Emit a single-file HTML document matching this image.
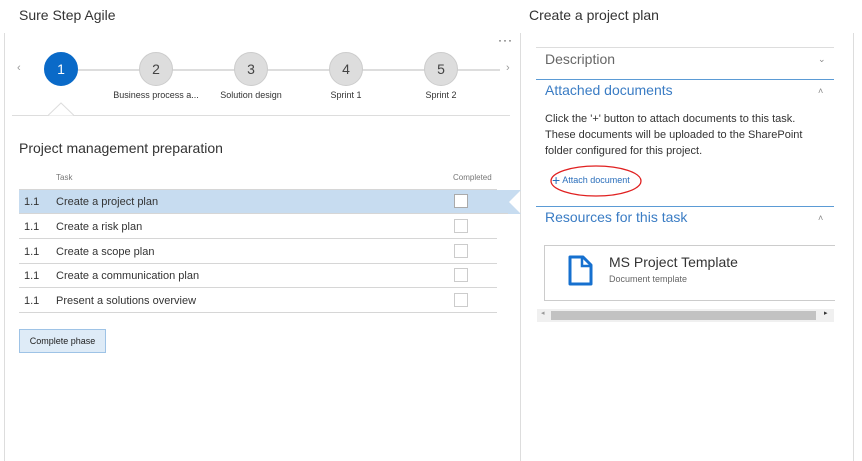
<!DOCTYPE html>
<html><head><style>
*{margin:0;padding:0;box-sizing:border-box}
body{width:862px;height:461px;background:#fff;font-family:"Segoe UI","Liberation Sans",sans-serif;color:#333;position:relative;overflow:hidden}
.a{position:absolute}
.circ{position:absolute;width:34px;height:34px;border-radius:50%;background:#ddd;border:1px solid #ccc;text-align:center;line-height:32px;font-size:14px;color:#444}
.lbl{position:absolute;font-size:9px;color:#333;text-align:center;width:100px}
.row{position:absolute;left:19px;width:478px;height:24px;border-bottom:1px solid #d6d6d6;font-size:11px;line-height:24px}
.row .n{position:absolute;left:5px}
.row .t{position:absolute;left:37px}
.cb{position:absolute;left:435px;top:4px;width:14px;height:14px;border:1px solid #aaa;background:#fff}
.hd{position:absolute;left:545px;font-size:14px}
.chev{position:absolute;left:818px;font-size:9px;color:#888}
</style></head><body>
<div class="a" style="left:19px;top:7px;font-size:14px;color:#333">Sure Step Agile</div>
<div class="a" style="left:529px;top:7px;font-size:14px;color:#333">Create a project plan</div>
<div class="a" style="left:4px;top:33px;width:1px;height:428px;background:#ddd"></div>
<div class="a" style="left:520px;top:33px;width:1px;height:428px;background:#ddd"></div>
<div class="a" style="left:853px;top:33px;width:1px;height:428px;background:#ddd"></div>
<div class="a" style="left:498px;top:33px;font-size:12px;color:#333;letter-spacing:1px">···</div>
<div class="a" style="left:17px;top:62px;font-size:11px;color:#999">‹</div>
<div class="a" style="left:506px;top:62px;font-size:11px;color:#999">›</div>
<div class="a" style="left:60px;top:69px;width:440px;height:2px;background:#ddd"></div>
<div class="circ" style="left:44px;top:52px;background:#0a6ac8;border-color:#0a6ac8;color:#fff">1</div>
<div class="circ" style="left:139px;top:52px">2</div>
<div class="circ" style="left:234px;top:52px">3</div>
<div class="circ" style="left:329px;top:52px">4</div>
<div class="circ" style="left:424px;top:52px">5</div>
<div class="lbl" style="left:106px;top:90px">Business process a...</div>
<div class="lbl" style="left:201px;top:90px">Solution design</div>
<div class="lbl" style="left:296px;top:90px">Sprint 1</div>
<div class="lbl" style="left:391px;top:90px">Sprint 2</div>
<div class="a" style="left:12px;top:115px;width:498px;height:1px;background:#ddd"></div>
<svg class="a" style="left:48px;top:101px" width="26" height="15"><path d="M0 14.5 L13 2 L26 14.5" fill="#fff" stroke="#ddd"/></svg>
<div class="a" style="left:19px;top:140px;font-size:14px;color:#333">Project management preparation</div>
<div class="a" style="left:56px;top:173px;font-size:8px;color:#777">Task</div>
<div class="a" style="left:453px;top:173px;font-size:8px;color:#777">Completed</div>
<div class="a" style="left:19px;top:189px;width:478px;height:1px;background:#d6d6d6"></div>
<div class="row" style="top:190px;background:#c7dcf0;width:490px"><span class="n">1.1</span><span class="t">Create a project plan</span><span class="cb"></span></div>
<svg class="a" style="left:508px;top:190px" width="13" height="24"><path d="M0 0 H13 L1 12 L13 24 H0Z" fill="#c7dcf0"/></svg>
<div class="row" style="top:215px"><span class="n">1.1</span><span class="t">Create a risk plan</span><span class="cb" style="border-color:#ccc"></span></div>
<div class="row" style="top:240px"><span class="n">1.1</span><span class="t">Create a scope plan</span><span class="cb" style="border-color:#ccc"></span></div>
<div class="row" style="top:264px"><span class="n">1.1</span><span class="t">Create a communication plan</span><span class="cb" style="border-color:#ccc"></span></div>
<div class="row" style="top:289px"><span class="n">1.1</span><span class="t">Present a solutions overview</span><span class="cb" style="border-color:#ccc"></span></div>
<div class="a" style="left:19px;top:329px;width:87px;height:24px;background:#deebf7;border:1px solid #9ec3e6;font-size:9px;line-height:22px;text-align:center;color:#222">Complete phase</div>

<div class="a" style="left:536px;top:47px;width:298px;height:1px;background:#ddd"></div>
<div class="hd" style="top:51px;color:#666">Description</div><div class="chev" style="top:54px">⌄</div>
<div class="a" style="left:536px;top:79px;width:298px;height:1px;background:#5b9bd5"></div>
<div class="hd" style="top:82px;color:#3a7cc4">Attached documents</div><div class="chev" style="top:86px">˄</div>
<div class="a" style="left:545px;top:111px;font-size:11px;line-height:16px;color:#333;width:300px">Click the '+' button to attach documents to this task.<br>These documents will be uploaded to the SharePoint<br>folder configured for this project.</div>
<div class="a" style="left:552px;top:172px;font-size:9px;color:#2a6ebb"><span style="font-size:14px;vertical-align:-2px">+</span> Attach document</div>
<svg class="a" style="left:548px;top:164px" width="100" height="36"><ellipse cx="48" cy="17" rx="45" ry="15" fill="none" stroke="#e02020" stroke-width="1.3"/></svg>
<div class="a" style="left:536px;top:206px;width:298px;height:1px;background:#5b9bd5"></div>
<div class="hd" style="top:209px;color:#3a7cc4">Resources for this task</div><div class="chev" style="top:213px">˄</div>
<div class="a" style="left:544px;top:245px;width:291px;height:56px;border:1px solid #ccc;border-right:none"></div>
<svg class="a" style="left:568px;top:255px" width="26" height="32"><path d="M2 2 H15 L23 10 V29 H2Z" fill="none" stroke="#1670cf" stroke-width="3" stroke-linejoin="round"/><path d="M14 2 V11 H23" fill="none" stroke="#1670cf" stroke-width="2.5"/></svg>
<div class="a" style="left:609px;top:254px;font-size:14px;color:#333">MS Project Template</div>
<div class="a" style="left:609px;top:274px;font-size:9px;color:#666">Document template</div>
<div class="a" style="left:537px;top:309px;width:297px;height:13px;background:#f0f0f0"></div>
<div class="a" style="left:551px;top:311px;width:265px;height:9px;background:#c2c2c2"></div>
<div class="a" style="left:541px;top:309px;font-size:7px;color:#999">◂</div>
<div class="a" style="left:824px;top:309px;font-size:7px;color:#333">▸</div>
</body></html>
